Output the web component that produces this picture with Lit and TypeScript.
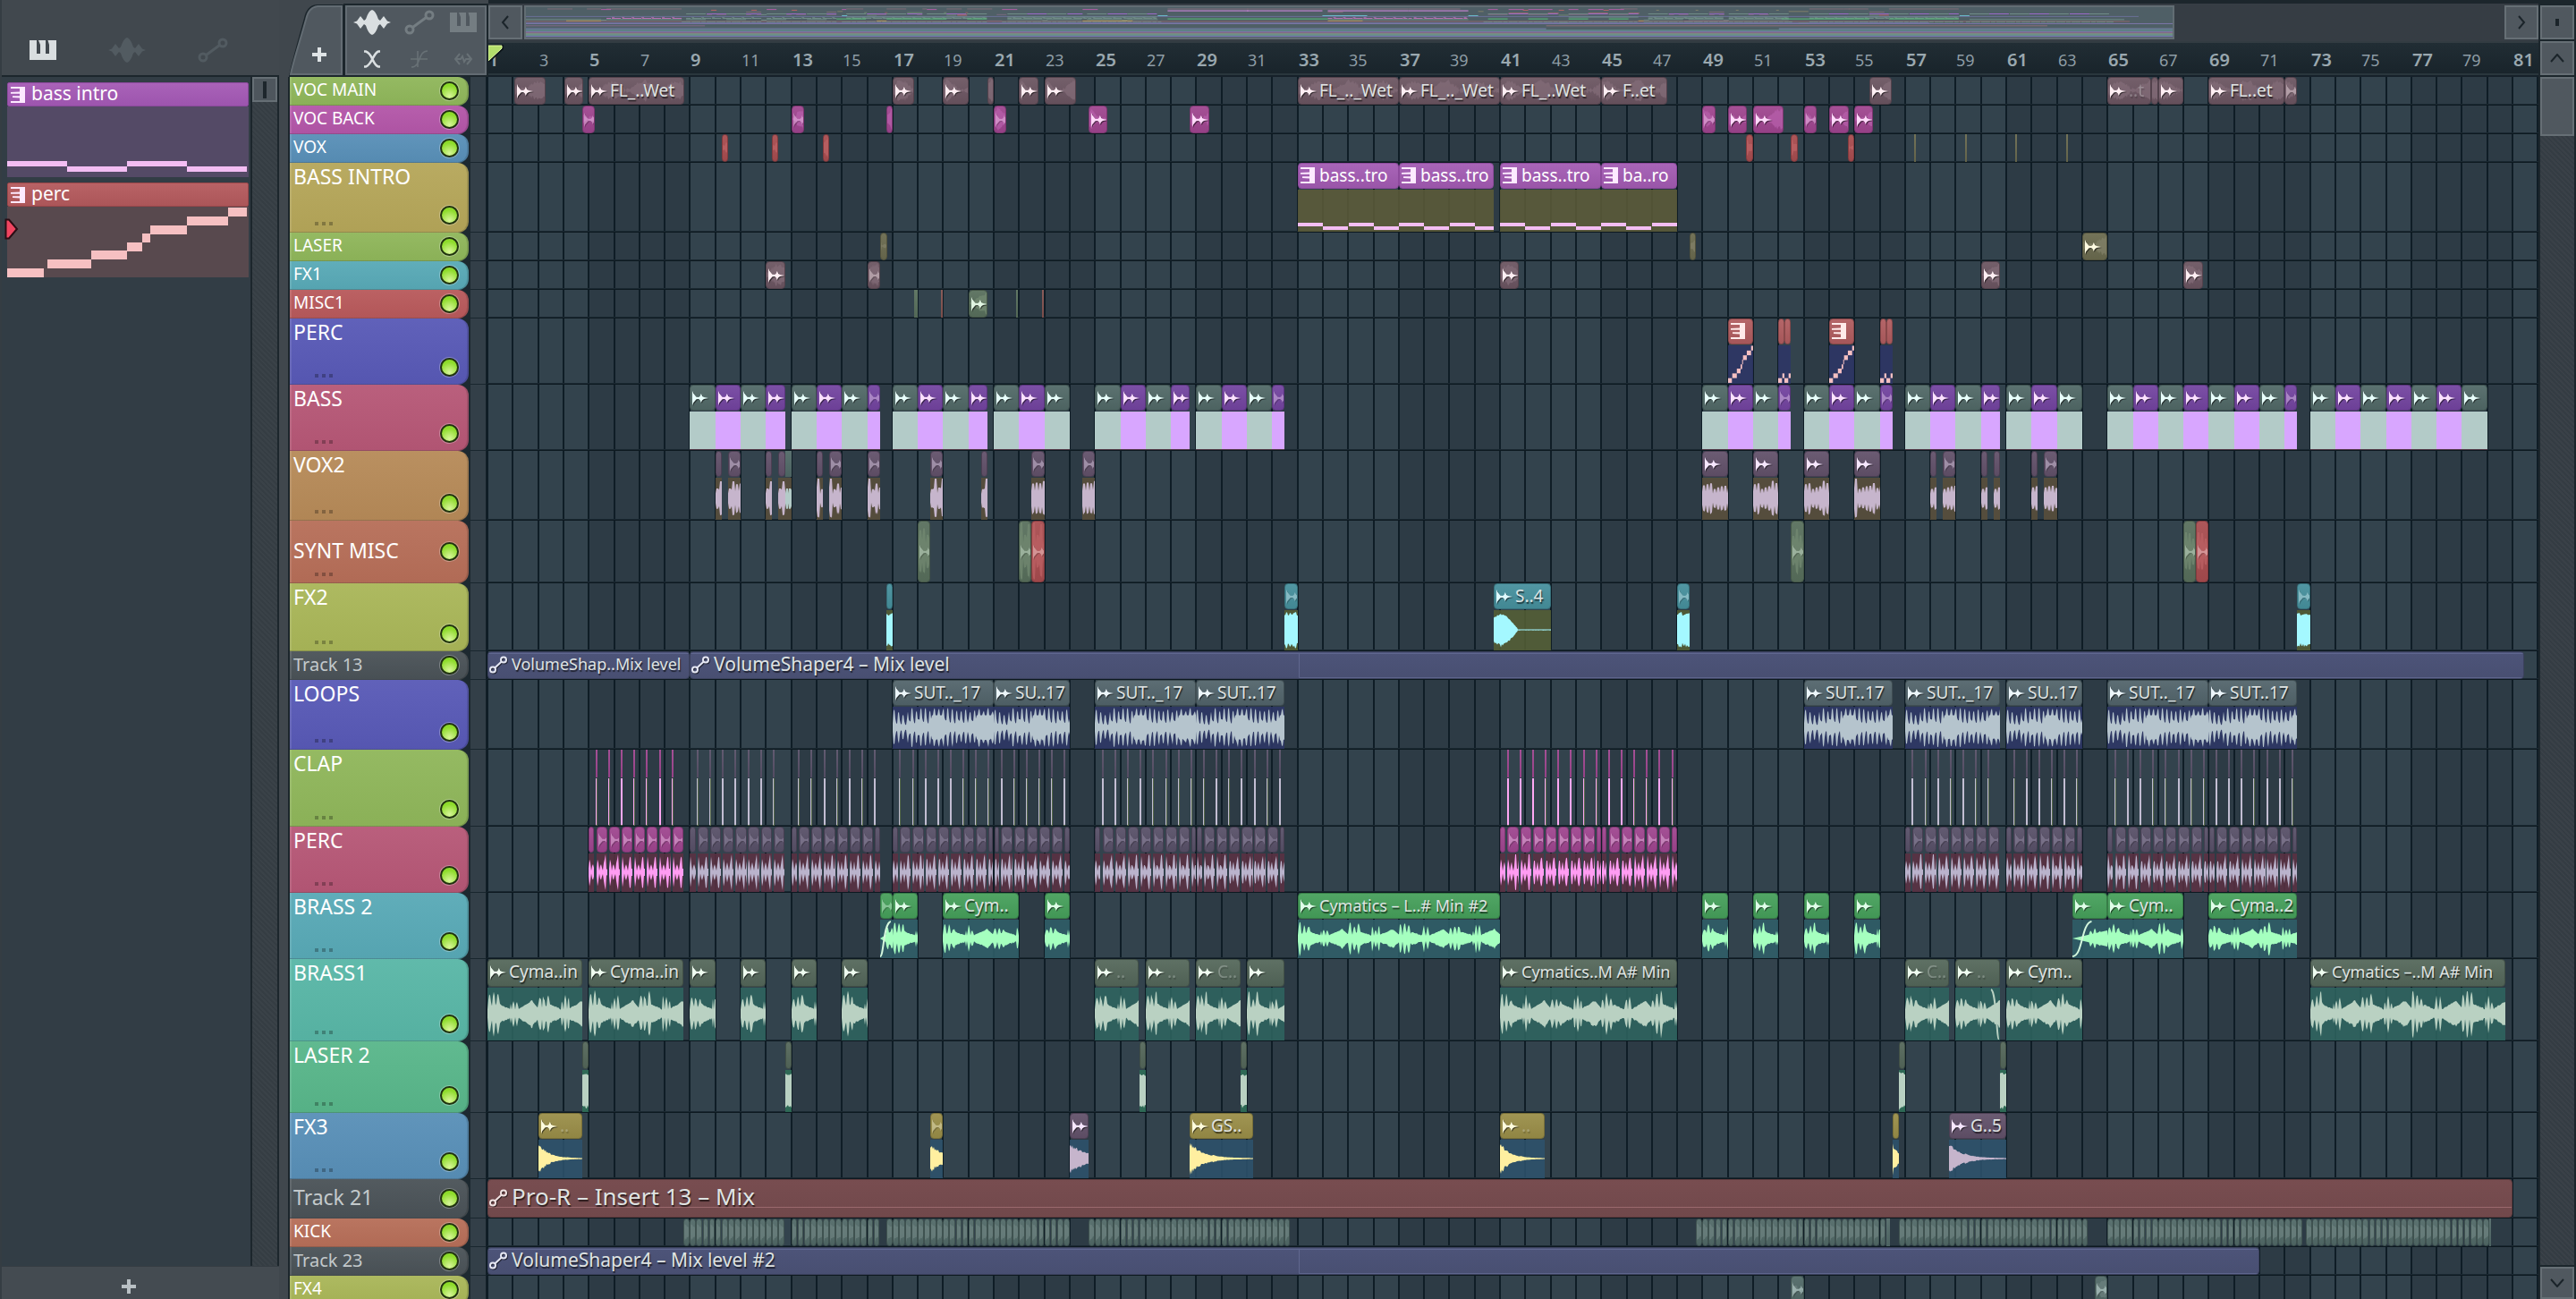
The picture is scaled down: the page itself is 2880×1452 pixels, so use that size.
import { LitElement, html, svg, css, nothing } from "lit";
import { customElement, property } from "lit/decorators.js";
import { classMap } from "lit/directives/class-map.js";
import { styleMap } from "lit/directives/style-map.js";

const BAR = 28.3;
const BARS = 82;
const xOf = (bar: number) => Math.round((bar - 1) * BAR);

type Kind = "blob" | "solid" | "brass" | "loop" | "perc" | "vox" | "decay" | "sweep" | "block" | "notes" | "steps" | "none";
interface Paint { head: string; inner: string; wave: string; icon: string }
interface Clip { s: number; e: number; c: string; label?: string; dim?: boolean; fade?: "in" | "out"; keys?: boolean; kind?: Kind }
interface Track {
  name: string; h: number; color: string; body?: string; kind: Kind; clips: Clip[];
  auto?: boolean; muted?: boolean; mid?: boolean;
}

const PAINT: Record<string, Paint> = {
  mauve: { head: "#6b5561", inner: "#836c78", wave: "#c8b5cc", icon: "#ffeef3" },
  plum: { head: "#62516a", inner: "#7a6980", wave: "#c6b5cc", icon: "#f6e6ff" },
  haze: { head: "#585068", inner: "#7c748c", wave: "#bab3cc", icon: "#a49cb4" },
  magenta: { head: "#9f458f", inner: "#b75fab", wave: "#ff9cf2", icon: "#ffd9fa" },
  red: { head: "#a84c4f", inner: "#bd6265", wave: "#ffc3c3", icon: "#ffe4e4" },
  rose: { head: "#b05c5f", inner: "#c07073", wave: "#f6c0c2", icon: "#ffeaea" },
  rust: { head: "#82524f", inner: "#946562", wave: "#dcc0be", icon: "#ffeaea" },
  olive: { head: "#6a6a4e", inner: "#828068", wave: "#e6e4c0", icon: "#fffbe2" },
  sage: { head: "#586f5c", inner: "#738a72", wave: "#cfe4cf", icon: "#e0f5e2" },
  moss: { head: "#54675a", inner: "#6d8072", wave: "#b9d1c2", icon: "#effdf0" },
  fern: { head: "#46a05b", inner: "#5fb472", wave: "#a5ffbf", icon: "#dfffe8" },
  teal: { head: "#46909d", inner: "#66a6b0", wave: "#a4f8ff", icon: "#dffaff" },
  pine: { head: "#516967", inner: "#6c817f", wave: "#b3cbc8", icon: "#e8fffb" },
  violet: { head: "#7344a0", inner: "#8c60b4", wave: "#d8a6ff", icon: "#fbe0ff" },
  orchid: { head: "#a35bb3", inner: "#b472c2", wave: "#f3bdf3", icon: "#fdeaff" },
  slate: { head: "#52646b", inner: "#6c7d84", wave: "#b5c4cd", icon: "#ecf6fb" },
  gold: { head: "#9a8e48", inner: "#b0a462", wave: "#ffefa0", icon: "#fffcdc" },
  indigo: { head: "#4d5479", inner: "#6a7098", wave: "#c8cce8", icon: "#e6e8f4" },
  brick: { head: "#784d50", inner: "#93666a", wave: "#e4c8c8", icon: "#f0e2e2" },
};

const cl = (c: string, ...list: [number, number, string?][]): Clip[] =>
  list.map(([s, e, label]) => ({ s, e, c, label }));

const bassRun = (s: number, e: number): Clip[] => {
  const out: Clip[] = [];
  for (let b = s, i = 0; b < e; b++, i++) out.push({ s: b, e: Math.min(b + 1, e), c: i % 2 ? "violet" : "pine" });
  return out;
};
const clapRun = (c: string, s: number, n: number): Clip[] =>
  Array.from({ length: n }, (_, i) => ({ s: s + 0.27 + i * 0.5, e: s + 0.27 + i * 0.5, c }));
const percRun = (c: string, s: number, e: number): Clip[] => {
  const out: Clip[] = [{ s, e: s + 0.22, c }];
  for (let b = s + 0.3; b < e - 0.1; b += 0.5) {
    const inBlock = (b - s) % 4;
    if (inBlock > 3.7) {
      out.push({ s: b, e: b + 0.18, c }, { s: b + 0.22, e: b + 0.42, c });
    } else out.push({ s: b, e: Math.min(b + 0.43, e), c });
  }
  return out;
};
const kickRun = (s: number, e: number): Clip[] => {
  const out: Clip[] = [];
  for (let b = s; b < e - 0.05; b += 0.25) out.push({ s: b, e: Math.min(b + 0.24, e), c: "pine" });
  return out;
};

const GREEN = "#8fb65a", BLUE = "#588fb7", INDIGO = "#5859b6", PINK = "#b65776", TERRA = "#b66e58", LIME = "#a9b658", GREY = "#4a5257";

const TRACKS: Track[] = [
  { name: "VOC MAIN", h: 32, color: GREEN, kind: "blob", clips: [
    ...cl("mauve", [2.05, 3.3], [4.05, 4.78], [5, 8.77, "FL_..Wet"], [17, 17.85], [19, 20], [20.77, 21], [22, 22.75], [23, 24.25],
      [33, 37, "FL_.._Wet"], [37, 41, "FL_.._Wet"], [41, 45, "FL_..Wet"], [45, 47.6, "F..et"], [55.6, 56.46]),
    { s: 65, e: 66.72, c: "mauve", label: "..t", dim: true },
    ...cl("mauve", [66.74, 67], [67, 68], [69, 72, "FL..et"], [72, 72.48])] },
  { name: "VOC BACK", h: 32, color: "#b356a8", kind: "blob", clips: cl("magenta", [4.75, 5.25], [13, 13.5], [16.77, 17], [21, 21.5],
      [24.75, 25.5], [28.75, 29.5], [49, 49.5], [50, 50.75], [51, 52.2], [53, 53.5], [54, 54.77], [55, 55.75]) },
  { name: "VOX", h: 32, color: BLUE, kind: "blob", clips: [
    ...cl("red", [10.25, 10.5], [12.25, 12.5], [14.25, 14.5], [50.73, 51], [52.5, 52.75], [54.73, 55]),
    ...cl("olive", [57.37, 57.42], [59.36, 59.41], [61.36, 61.41], [63.37, 63.42])] },
  { name: "BASS INTRO", h: 78, color: "#b5a659", body: "#5c5b39", kind: "notes", clips:
      cl("orchid", [33, 37, "bass..tro"], [37, 40.75, "bass..tro"], [41, 45, "bass..tro"], [45, 48, "ba..ro"]).map((c) => ({ ...c, keys: true })) },
  { name: "LASER", h: 32, color: GREEN, kind: "blob", clips: cl("olive", [16.53, 16.78], [48.5, 48.75], [64, 65]) },
  { name: "FX1", h: 32, color: "#58a9b6", kind: "blob", clips: cl("mauve", [12, 12.75], [16, 16.5], [41, 41.75], [60, 60.75], [68, 68.76]) },
  { name: "MISC1", h: 32, color: "#b8595b", kind: "blob", clips: [
    ...cl("sage", [17.87, 18], [20, 20.75], [21.87, 21.97]), ...cl("rust", [18.9, 18.98], [22.9, 22.98])] },
  { name: "PERC", h: 74, color: INDIGO, body: "#2e3666", kind: "steps", clips:
      cl("rose", [50, 51], [52, 52.25], [52.25, 52.5], [54, 55], [56, 56.25], [56.25, 56.5]).map((c) => ({ ...c, keys: true })) },
  { name: "BASS", h: 74, color: PINK, body: "#5a3a4a", kind: "solid", clips: [
    ...bassRun(9, 12.75), ...bassRun(13, 16.5), ...bassRun(17, 20.75), ...bassRun(21, 24), ...bassRun(25, 28.75), ...bassRun(29, 32.5),
    ...bassRun(49, 52.5), ...bassRun(53, 56.5), ...bassRun(57, 60.75), ...bassRun(61, 64), ...bassRun(65, 72.5), ...bassRun(73, 80)] },
  { name: "VOX2", h: 78, color: "#b68a58", body: "#5a4e3b", kind: "vox", clips: [
    ...cl("plum", [10, 10.25], [10.5, 11], [12, 12.25], [12.5, 12.75]), ...cl("pine", [12.75, 12.87], [12.87, 13]),
    ...cl("plum", [14, 14.25], [14.5, 15], [16, 16.5], [18.5, 19], [20.5, 20.75], [22.5, 23], [24.5, 25],
      [49, 50], [51, 52], [53, 54], [55, 56], [58, 58.25], [58.5, 59], [60, 60.25], [60.5, 60.75], [62, 62.25], [62.5, 63])] },
  { name: "SYNT MISC", h: 70, color: TERRA, kind: "vox", mid: true, clips: [
    ...cl("sage", [18, 18.5], [22, 22.5], [52.5, 53], [68, 68.5]), ...cl("red", [22.5, 23], [68.5, 69])] },
  { name: "FX2", h: 76, color: LIME, body: "#545e36", kind: "block", clips: [
    ...cl("teal", [16.75, 17], [32.5, 33]), { s: 40.75, e: 43, c: "teal", label: "S..4", kind: "sweep" }, ...cl("teal", [48, 48.5], [72.5, 73])] },
  { name: "Track 13", h: 32, color: GREY, muted: true, kind: "none", auto: true, clips:
      cl("indigo", [1, 9, "VolumeShap..Mix level"], [9, 81.46, "VolumeShaper4 – Mix level"]) },
  { name: "LOOPS", h: 78, color: INDIGO, body: "#2e3767", kind: "loop", clips: cl("slate", [17, 21, "SUT.._17"], [21, 24, "SU..17"],
      [25, 29, "SUT.._17"], [29, 32.5, "SUT..17"], [53, 56.5, "SUT..17"], [57, 60.75, "SUT.._17"], [61, 64, "SU..17"], [65, 69, "SUT.._17"], [69, 72.5, "SUT..17"]) },
  { name: "CLAP", h: 86, color: GREEN, body: "#5b704a", kind: "solid", clips: [
    ...clapRun("magenta", 5, 7), ...clapRun("haze", 9, 7), ...clapRun("haze", 13, 7), ...clapRun("haze", 17, 14), ...clapRun("haze", 25, 15),
    ...clapRun("magenta", 41, 14), ...clapRun("haze", 57, 7), ...clapRun("haze", 61, 6), ...clapRun("haze", 65, 15)] },
  { name: "PERC", h: 74, color: PINK, body: "#5b3143", kind: "perc", clips: [
    ...percRun("magenta", 5, 8.75), ...percRun("haze", 9, 12.75), ...percRun("haze", 13, 16.5), ...percRun("haze", 17, 24), ...percRun("haze", 25, 32.5),
    ...percRun("magenta", 41, 48), ...percRun("haze", 57, 60.75), ...percRun("haze", 61, 64), ...percRun("haze", 65, 72.5)] },
  { name: "BRASS 2", h: 74, color: "#58a9b6", body: "#305f69", kind: "brass", clips: [
    { s: 16.5, e: 17, c: "fern", fade: "in" }, ...cl("fern", [17, 18], [19, 22, "Cym.."], [23, 24], [33, 41, "Cymatics – L..# Min #2"],
      [49, 50], [51, 52], [53, 54], [55, 56]), { s: 63.62, e: 65, c: "fern", fade: "in" }, ...cl("fern", [65, 68, "Cym.."], [69, 72.5, "Cyma..2"])] },
  { name: "BRASS1", h: 92, color: "#58b6a6", body: "#2f6460", kind: "brass", clips: [
    ...cl("moss", [1, 4.75, "Cyma..in"], [5, 8.75, "Cyma..in"], [9, 10], [11, 12], [13, 14], [15, 16]),
    ...cl("moss", [25, 26.72, ".."], [27, 28.75, ".."], [29, 30.75, "C.."]).map((c) => ({ ...c, dim: true })),
    ...cl("moss", [31, 32.5], [41, 48, "Cymatics..M A# Min"]), { s: 57, e: 58.75, c: "moss", label: "C..", dim: true },
    { s: 59, e: 60.75, c: "moss", label: "..", dim: true, fade: "out" }, ...cl("moss", [61, 64, "Cym.."], [73, 80.72, "Cymatics –..M A# Min"])] },
  { name: "LASER 2", h: 80, color: "#58b68a", body: "#2f7058", kind: "block", clips: cl("moss", [4.75, 5], [12.75, 13], [26.75, 27], [30.75, 31], [56.75, 57], [60.75, 61]) },
  { name: "FX3", h: 74, color: BLUE, body: "#2e526c", kind: "decay", clips: [
    { s: 3, e: 4.73, c: "gold", label: "..", dim: true }, ...cl("gold", [18.5, 19]), ...cl("plum", [24, 24.75]),
    ...cl("gold", [28.75, 31.25, "GS.."]), { s: 41, e: 42.75, c: "gold", label: "..", dim: true }, ...cl("gold", [56.5, 56.75]), ...cl("plum", [58.75, 61, "G..5"])] },
  { name: "Track 21", h: 44, color: GREY, muted: true, mid: true, kind: "none", auto: true, clips: cl("brick", [1, 81, "Pro-R – Insert 13 – Mix"]) },
  { name: "KICK", h: 32, color: TERRA, kind: "decay", clips: [
    ...kickRun(8.75, 12.75), ...kickRun(13, 16.5), ...kickRun(16.75, 24), ...kickRun(24.75, 32.7), ...kickRun(48.75, 56.42), ...kickRun(56.75, 64.2),
    ...kickRun(65, 72.7), ...kickRun(72.83, 80.15)] },
  { name: "Track 23", h: 32, color: GREY, muted: true, kind: "none", auto: true, clips: cl("indigo", [1, 71, "VolumeShaper4 – Mix level #2"]) },
  { name: "FX4", h: 32, color: LIME, kind: "blob", clips: cl("pine", [52.5, 53], [64.5, 65]) },
];

const rand = (n: number) => {
  const v = Math.sin(n * 127.1 + 11.7) * 43758.5453;
  return v - Math.floor(v);
};

const LOOP_COL = [0.22, 0.9, 1, 0.5, 0.25];
const PERC_COL = [0.2, 0.85, 0.6, 0.08, 0.35, 0.55, 0.3, 0.1, 0.5, 0.95, 1, 0.2];

/* Amplitude of a waveform kind at pixel x of a clip that is w pixels wide. */
function amp(kind: Kind, x: number, w: number, seed: number): number {
  const t = x / BAR;
  switch (kind) {
    case "brass": {
      const p = t % 2;
      const k = rand(Math.floor(t * 9) + seed * 3);
      const spike = Math.abs(Math.sin(t * 19));
      if (p < 0.46) return 0.16 + spike * (0.34 + k * 0.45);
      if (p < 0.9) return 0.15 + (0.9 - p) * 0.45 + rand(x) * 0.06;
      if (p < 1.22) return 0.14 + Math.abs(Math.sin(t * 23)) * (0.28 + k * 0.36);
      if (p < 1.78) return 0.16 + (p - 1.22) * 0.62 + rand(x) * 0.05;
      return 0.48 - (p - 1.78) * 1.2;
    }
    case "loop": {
      const bar = Math.floor(t);
      const dense = t % 4 > 3.3 || (t % 4 > 1.55 && t % 4 < 2);
      const beat = (t * 2) % 1;
      const base = LOOP_COL[Math.floor(x) % 5] * (0.78 + rand(Math.floor(x / 5) + bar) * 0.24);
      if (t % 4 < 0.6) return base * (1 - (t % 4) * 0.7);
      return Math.max(base, dense ? 0.62 : 0.42 - beat * 0.3);
    }
    case "perc":
      return Math.min(1, PERC_COL[Math.floor(x) % 12] * (0.7 + rand(Math.floor(x) + seed * 7) * 0.45));
    case "vox": {
      const c = Math.floor(x / 4);
      const a = 0.38 + rand(c + seed) * 0.5 + (rand(c * 3 + seed) > 0.75 ? 0.25 : 0);
      return Math.floor(x) % 4 === 0 ? a * 0.5 : a;
    }
    case "decay":
      return (w < 24 ? 0.75 * Math.exp((-0.9 * x) / w) : 0.85 * Math.exp((-4.4 * x) / w)) * (0.75 + rand(x + seed) * 0.35) + 0.02;
    case "sweep": {
      const u = x / w;
      return u < 0.42 ? 0.8 * Math.sin(Math.PI * (0.3 + u * 1.6)) ** 1.2 * (0.9 + rand(x) * 0.12) + 0.03 : 0.03;
    }
    case "block":
      return 0.74 + rand(Math.floor(x / 2) + seed) * 0.2;
    case "blob":
      return Math.max(0.04, 0.45 + 0.35 * Math.sin(t * 5 + seed) + (rand(x + seed) - 0.5) * 0.35);
    default:
      return 1;
  }
}

function wavePath(kind: Kind, w: number, h: number, seed: number): string {
  const mid = h / 2;
  const top: string[] = [];
  const bottom: string[] = [];
  for (let x = 0; x <= w; x++) {
    const a = Math.min(1, Math.max(0.02, amp(kind, x, w, seed) || 0.02));
    const b = Math.min(1, a * (0.9 + rand(x * 3 + seed) * 0.2));
    top.push(`${x} ${(mid - a * (mid - 1)).toFixed(1)}`);
    bottom.unshift(`${x} ${(mid + b * (mid - 1)).toFixed(1)}`);
  }
  return `M${top.join("L")}L${bottom.join("L")}Z`;
}

const STEPS: [number, number, number][] = [
  [0, 41, 69], [45, 49, 59], [94, 40, 49], [134, 17, 40], [151, 9, 30], [160, 41, 21], [201, 46, 11], [247, 21, 1],
];

const waveIcon = html`<svg class="i-wave" viewBox="0 0 18 16" aria-hidden="true">
  <path d="M0 0Q1 3.4 4.6 6.8L7 7Q9.2 6 9.8 3Q10.6 6 13 7L18 8L13 9Q10.6 10 9.8 13Q9.2 10 7 9L4.6 9.2Q1 12.6 0 16Z" fill="currentColor"/></svg>`;
const keysIcon = html`<svg class="i-keys" viewBox="0 0 16 18" aria-hidden="true">
  <path d="M0 0H16V18H0V16H10V12.6L2 12V10.2H10V7.8H0V6L10 5.4V2H0Z" fill="currentColor"/></svg>`;
const linkIcon = html`<svg class="i-link" viewBox="0 0 20 20" aria-hidden="true">
  <g fill="none" stroke="currentColor" stroke-width="2"><circle cx="4" cy="15.5" r="3"/><circle cx="16" cy="4.5" r="3"/><path d="M6.2 13.4L13.8 6.6"/></g></svg>`;
const bigWave = html`<svg width="42" height="28" viewBox="0 0 42 28" aria-hidden="true">
  <path d="M0 14L4 12.5L8 7L12 12L14 10.5Q17 1 21 0Q25 1 28 10.5L30 12L34 7L38 12.5L42 14L38 15.5L34 21L30 16L28 17.5Q25 27 21 28Q17 27 14 17.5L12 16L8 21L4 15.5Z" fill="currentColor"/></svg>`;
const bigLink = html`<svg width="34" height="28" viewBox="0 0 34 28" aria-hidden="true">
  <g fill="none" stroke="currentColor" stroke-width="3"><circle cx="6" cy="22" r="4"/><circle cx="28" cy="6" r="4"/><path d="M9.5 19.5L24.5 8.5"/></g></svg>`;
const bigKeys = html`<svg width="30" height="22" viewBox="0 0 30 22" aria-hidden="true">
  <path d="M0 0H8V15H12V5L10 0H18V15H22V5L20.5 0H30V22H0Z" fill="currentColor"/></svg>`;
const crossIcon = html`<svg width="20" height="20" viewBox="0 0 20 20" aria-hidden="true">
  <path d="M1 1.5H3C11 4 10 16 17 18.5H19M1 18.5H3C10 16 11 4 17 1.5H19" fill="none" stroke="currentColor" stroke-width="2.6"/></svg>`;
const curveIcon = html`<svg width="20" height="20" viewBox="0 0 20 20" aria-hidden="true">
  <path d="M1 19C12 19 8 1 19 1M0 10H19M8 1V19" fill="none" stroke="currentColor" stroke-width="1.6"/></svg>`;
const stretchIcon = html`<svg width="22" height="14" viewBox="0 0 22 14" aria-hidden="true">
  <path d="M7 1L2 7L7 13M15 1L20 7L15 13M2 7H8L10 4L12 10L14 7H20" fill="none" stroke="currentColor" stroke-width="2"/></svg>`;
const plusIcon = html`<svg width="16" height="16" viewBox="0 0 16 16" aria-hidden="true"><path d="M6 0H10V6H16V10H10V16H6V10H0V6H6Z" fill="currentColor"/></svg>`;

@customElement("pl-clip")
export class PlClip extends LitElement {
  @property({ attribute: false }) clip!: Clip;
  @property({ attribute: false }) track!: Track;

  static styles = css`
    :host { display: flex; flex-direction: column; box-sizing: border-box; overflow: hidden; }
    .head { display: flex; align-items: flex-start; box-sizing: border-box; position: relative; overflow: hidden; border: 1px solid var(--edge); border-radius: 4px;
      background: linear-gradient(var(--hi), var(--lo)); color: var(--ink); flex: none; }
    .head.thin { border-width: 0; border-radius: 0; }
    .head.full { flex: 1; }
    .inner { position: absolute; inset: 0; opacity: 0.75; }
    .glyph { flex: none; display: flex; width: 23px; padding-left: 2px; padding-top: 6px; box-sizing: border-box; position: relative; }
    .full .glyph { padding-top: 7px; }
    .tall .glyph { padding-top: 26px; }
    .auto .glyph { width: 26px; padding-left: 1px; }
    .ghost { opacity: 0.4; padding-left: 1px; }
    .i-wave { width: 18px; height: 16px; filter: drop-shadow(1px 1px 0 #0008); }
    .i-keys { width: 16px; height: 18px; margin-top: -2px; }
    .i-link { width: 20px; height: 20px; margin-top: -3px; filter: drop-shadow(1px 1px 0 #0008); }
    .label { position: relative; font-size: 19px; line-height: 26px; white-space: nowrap; text-shadow: 1px 2px 1px #0009; color: #dfe3e2; }
    .full .label { line-height: 28px; }
    .auto .label { font-size: 21px; line-height: 27px; }
    .label.compact, .auto .label.compact { font-size: 18px; }
    .keys .label { color: #fff; text-shadow: none; }
    .big .label { font-size: 26px; line-height: 37px; }
    .big .glyph { padding-top: 13px; }
    .faint { opacity: 0.3; }
    .body { flex: 1; min-height: 0; margin-top: 1px; background: var(--body); display: block; overflow: hidden; }
    svg { display: block; }
  `;

  render() {
    const { clip, track } = this;
    const p = PAINT[clip.c];
    const w = Math.max(2, xOf(clip.e) - xOf(clip.s));
    const split = track.h >= 74;
    const headH = track.h >= 80 ? 30 : 28;
    const bodyH = track.h - headH - 4;
    const kind = clip.kind ?? track.kind;
    const seed = track.name.length * 5 + Math.round(clip.s * 0.25);
    const icon = w >= 12;
    const edge = `color-mix(in srgb, ${p.head} 78%, black)`;
    const vars = {
      "--hi": track.auto ? p.head : `color-mix(in srgb, ${p.head} 94%, white)`,
      "--lo": `color-mix(in srgb, ${p.head} 94%, black)`,
      "--edge": clip.c === "orchid" ? "#8d4a9c" : edge, "--ink": p.icon,
      ...(split ? { height: `${headH + 1}px` } : {}),
    };
    const compact = (clip.label?.length ?? 0) > 16 && clip.e - clip.s <= 8;
    const head = html`<div class=${classMap({ head: true, thin: w < 5, full: !split, tall: !split && track.h > 60, keys: !!clip.keys, auto: !!track.auto, big: !!track.auto && track.h > 40 })} style=${styleMap(vars)}>
      ${!split && !track.auto && w > 4
        ? html`<svg class="inner" width=${w} height=${track.h - 2}><path d=${wavePath(kind, w, track.h - 4, seed)} fill=${p.inner}/></svg>` : nothing}
      ${track.auto ? html`<svg class="inner" width=${w} height=${track.h - 2}>${track.h > 40
        ? svg`<path d="M0 ${30.5}H${w - 2}" stroke="#a87478"/>`
        : svg`<path d="M0 1.5H${w - 2}M${xOf(33) - xOf(clip.s)}.5 2V28.5H${w}" fill="none" stroke="#747ba6" opacity=".7"/>`}</svg>` : nothing}
      ${icon ? html`<span class=${classMap({ glyph: true, ghost: w < 17 })}>${clip.keys ? keysIcon : track.auto ? linkIcon : waveIcon}</span>` : nothing}
      ${clip.label ? html`<span class=${classMap({ label: true, faint: !!clip.dim, compact })}>${clip.label}</span>` : nothing}
    </div>`;
    if (!split) return head;
    return html`${head}<div class="body" style=${styleMap({ "--body": (track.body ?? p.head) + "e0" })}>
      <svg width=${w} height=${bodyH}>${this.content(kind, w, bodyH, p, seed)}</svg></div>`;
  }

  private content(kind: Kind, w: number, h: number, p: Paint, seed: number) {
    const { clip } = this;
    if (kind === "solid") {
      return svg`<rect width=${w > 3 ? w : rand(clip.s * 9) > 0.5 ? 2 : 1} height=${h + 2} fill=${w > 3 ? p.wave : clip.c === "magenta" ? "#ffa8f4" : "#c2bdd2"}/>`;
    }
    if (kind === "notes") {
      const n = Math.ceil(clip.e - clip.s);
      return svg`${Array.from({ length: n }, (_, i) => svg`<rect x=${xOf(i + 1)} y=${i % 2 ? 41 : 37} width="28" height="4" fill=${p.wave}/>`)}`;
    }
    if (kind === "steps") {
      return svg`${STEPS.map(([x, sw, y]) => svg`<rect x=${x / 9.6} y=${(y * h) / 79} width=${Math.max(1, sw / 9.6)} height=${h / 8} fill=${p.wave}/>`)}`;
    }
    const fade = clip.fade === "in"
      ? svg`<path d=${`M${0} ${h - 1}C${w * 0.3} ${h - 1} ${w * 0.25} 4 ${w * (w > 20 ? 0.55 : 0.85)} 2`} fill="none" stroke="#d4f7dd" stroke-width="2"/>`
      : clip.fade === "out" ? svg`<path d=${`M${w - 10} 2C${w - 4} 4 ${w - 4} ${h} ${w - 1} ${h}`} fill="none" stroke="#b9d1c2" stroke-width="2"/>` : nothing;
    const from = clip.fade === "in" ? Math.round(w * 0.45) : 0;
    const ramp = clip.fade === "in" ? svg`<path d=${`M0 ${h / 2}L${w} ${h / 2 - 9}V${h / 2 + 9}Z`} fill=${p.wave}/>` : nothing;
    return svg`${ramp}<path d=${wavePath(kind, w - from, clip.fade === "in" ? h * 0.7 : h, seed)} transform=${`translate(${from} ${clip.fade === "in" ? h * 0.15 : 0})`} fill=${p.wave}/>${fade}`;
  }
}

@customElement("pl-minimap")
export class PlMinimap extends LitElement {
  static styles = css`:host { display: block; } svg { display: block; width: 100%; height: 100%; }`;

  private tint(t: Track, c: Clip): string {
    const bright: Record<string, string> = { orchid: "#e08aea", fern: "#58c47a", gold: "#d8b84c", teal: "#6fd0dc", magenta: "#c070b8", violet: "#a06cd0" };
    if (["pine", "haze", "moss", "slate"].includes(c.c)) return "#729089";
    if (t.auto || t.kind === "blob") return PAINT[c.c].inner;
    return bright[c.c] ?? PAINT[c.c].inner;
  }

  render() {
    const k = 22.4;
    const full: [number, number, number, string][] = [
      [25, 0, 1840, "#7b76a8"], [27.5, 0, 200, "#806a86"], [27.5, 1140, 560, "#8a6f78"], [31, 0, 1140, "#7782b0"], [31, 1400, 440, "#7a88b0"],
      [33, 0, 1840, "#6aa39e"], [34.5, 0, 1840, "#7f74a8"], [36, 0, 1840, "#9b7196"], [37.2, 0, 1840, "#86ad8c"], [38.4, 0, 1840, "#70a49c"], [40, 0, 1840, "#7f79bb"],
    ];
    return html`<svg viewBox="0 6 1840 36" preserveAspectRatio="none" aria-hidden="true">
      ${TRACKS.map((t, i) => t.clips.map((c) => svg`<rect x=${Math.round((c.s - 1) * k)} y=${(7.6 + i * 0.74).toFixed(1)}
        width=${Math.max(3, Math.round((c.e - c.s) * k))} height="1" fill=${this.tint(t, c)}/>`))}
      ${full.map(([y, x, w, f]) => svg`<rect x=${x} y=${y} width=${w} height="1.1" fill=${f}/>`)}
    </svg>`;
  }
}

@customElement("app-root")
export class AppRoot extends LitElement {
  static styles = css`
    :host { display: block; font-family: "Noto Sans", "Open Sans", sans-serif; color: #dfe3e4; }
    * { box-sizing: border-box; }
    svg { display: block; }
    button { border: 0; padding: 0; margin: 0; background: none; font: inherit; color: inherit; display: flex; align-items: center; justify-content: center; }
    .app { display: grid; grid-template-columns: 312px minmax(0, 1fr) 42px; grid-template-rows: minmax(0, 1fr); height: 100vh; overflow: hidden; background: #40474d; }

    .side { display: flex; flex-direction: column; min-width: 0; border-left: 2px solid #353d43; }
    .side-tools { height: 84px; flex: none; display: flex; align-items: flex-end; gap: 58px; padding: 0 0 14px 31px; background: #41484e; }
    .side-tools button { color: #525b61; height: 28px; }
    .side-tools button.on { color: #d9dee0; }
    .picker { flex: 1; min-height: 0; display: grid; grid-template-columns: minmax(0, 1fr) 2px 28px 2px; background: #1c262c; padding-top: 2px; }
    .patterns { margin: 0; padding: 6px 2px 0 6px; list-style: none; background: #323d45; display: flex; flex-direction: column; gap: 6px; position: relative; }
    .pattern { display: flex; flex-direction: column; height: 106px; }
    .pattern-head { display: flex; align-items: center; gap: 7px; height: 27px; padding-left: 3px; border-radius: 2px; justify-content: flex-start; font-size: 21px; line-height: 24px; color: #fff; padding-bottom: 4px; }
    .pattern.bass .pattern-head { background: linear-gradient(#a962b8, #9d55ae); border: 1px solid #8c4a9d; }
    .pattern.perc .pattern-head { background: linear-gradient(#b86265, #ac5659); border: 1px solid #9a4649; }
    .pattern-head svg { width: 16px; height: 18px; color: #fdeaff; margin-top: 4px; }
    .pattern-body { flex: 1; width: 100%; }
    .bass .pattern-body { background: #544a66; }
    .perc .pattern-body { background: #58494e; }
    .marker { position: absolute; left: 3px; top: 158px; }
    .track-bar { grid-column: 3; background: repeating-linear-gradient(45deg, #353d43 0 2px, #3a4248 2px 4px); }
    .grip { height: 28px; border: 2px solid #666f75; background: #4e565d; display: flex; justify-content: center; align-items: center; }
    .grip i { width: 4px; height: 19px; background: #1d262c; }
    .side-foot { height: 37px; flex: none; background: #444b51; border-top: 1px solid #353d43; color: #b9c0c4; padding: 8px 26px 0 0; width: 100%; }

    .main { display: grid; grid-template-rows: 86px minmax(0, 1fr); min-width: 0; min-height: 0; padding-left: 10px; }
    .top { display: grid; grid-template-columns: 224px minmax(0, 1fr); min-width: 0; }
    .tabs { display: grid; grid-template-columns: 60px 1fr; column-gap: 2px; padding: 4px 0 0 2px; position: relative; }
    .tab { position: relative; padding: 49px 0 0 25px; color: #dfe4e6; }
    .tab-shape { position: absolute; left: -2px; top: 0; }
    .tab .plus { position: relative; }
    .tools { display: grid; grid-template-columns: 56px 50px 1fr; grid-template-rows: 34px 32px; row-gap: 8px; border: 2px solid #636c73; background: #50585f; outline: 2px solid #1c262c; margin-top: 2px; margin-right: 2px; height: 78px; }
    .tools button { color: #747d82; }
    .tools button.on { color: #dadfe1; }
    .tools button.dim { color: #687176; }
    .time { display: flex; flex-direction: column; min-width: 0; }
    .map-row { height: 48px; flex: none; display: grid; grid-template-columns: 40px minmax(0, 5fr) minmax(0, 1fr) 38px; background: #363d44; border-top: 4px solid #1c262c; padding: 2px 0 4px; border-bottom: 2px solid #323c42; }
    .box { border: 2px solid #666f75; background: #50585f; color: #1b242a; width: 38px; }
    .map-row .box { height: 38px; }
    .map-row .right { grid-column: 4; }
    .map-thumb { height: 38px; border: 2px solid #626d73; background: #4f5f66; }
    pl-minimap { height: 34px; }
    .ruler { height: 34px; display: flex; background: linear-gradient(#212d34, #19242b); overflow: hidden; position: relative; color: #8e9da5; }
    .tick { flex: none; font-size: 18px; line-height: 39px; }
    .tick.major { font-size: 20px; line-height: 38px; font-weight: 600; color: #9aa8af; }
    .ruler-base { height: 4px; background: #2a363d; border-bottom: 2px solid #16212a; }
    .playhead { position: absolute; left: 0; top: 2px; }

    .rows { position: relative; overflow: hidden; border-left: 2px solid #1c262c; background: #2d3b45; }
    .grid { position: absolute; left: 220px; top: 0; height: 100%; width: calc(100% - 220px); }
    .row { display: grid; grid-template-columns: 200px 20px minmax(0, 1fr); position: relative; background: linear-gradient(#1d2930, #1d2930) no-repeat 0 0 / 202px 100%; }
    .track { display: grid; grid-template-columns: 1fr 40px; border-radius: 0 12px 12px 0; padding-left: 4px; position: relative; background: linear-gradient(color-mix(in srgb, var(--c) 95%, white), color-mix(in srgb, var(--c) 97%, black)); border-bottom: 1px solid #0003; border-right: 2px solid #0002; box-shadow: inset 2px 0 0 #ffffff1a; }
    .name { font-size: 19px; line-height: 29px; color: #fff; white-space: nowrap; }
    .large .name { font-size: 23px; line-height: 30px; }
    .mid .name { align-self: center; padding-bottom: 4px; }
    .muted .name { color: #c3c9cb; }
    .track:not(.large).muted .name { font-size: 20px; }
    .led { appearance: none; margin: 0; width: 21px; height: 21px; border-radius: 50%; border: 2px solid #21340f; box-shadow: 0 0 0 1px #ffffff48; background: radial-gradient(circle at 50% 85%, #d8f59a, #8ddb2a 70%); align-self: center; justify-self: center; margin-bottom: 1px; }
    .large:not(.mid) .led { align-self: end; margin-bottom: 8px; }
    .dots { position: absolute; left: 28px; bottom: 7px; width: 20px; height: 4px; background: repeating-linear-gradient(90deg, #0004 0 4px, transparent 4px 8px); }
    .gap { margin-left: 2px; background: #333f48; border-bottom: 1px solid #19262e; border-right: 1px solid #131f27; }
    .lane { position: relative; overflow: hidden; border-bottom: 1px solid #0d1920; box-shadow: inset 0 -1px 0 #1a2831; margin-left: 1px; }
    pl-clip { position: absolute; top: 0; bottom: 0; }

    .scroll { display: flex; flex-direction: column; background: #1c262c; padding: 6px 2px 0; gap: 2px; min-height: 0; }
    .scroll .box { flex: none; }
    .s-corner, .s-up { height: 38px; }
    .s-track { flex: 1; min-height: 0; background: repeating-linear-gradient(45deg, #343c43 0 2px, #3a4148 2px 4px); }
    .s-thumb { height: 66px; }
    .s-down { height: 36px; }
  `;

  private grid() {
    const out = [];
    for (let b = 1; b <= BARS; b++) {
      const x = xOf(b);
      const w = xOf(b + 1) - x;
      out.push(svg`<rect x=${x} y="0" width=${w} height="100%" fill=${Math.floor((b - 1) / 4) % 2 ? "#2d3b45" : "#33434d"}/><rect x=${x} y="0" width="2" height="100%" fill="#0f1d26"/>`);
    }
    return html`<svg class="grid" aria-hidden="true">${out}</svg>`;
  }

  private row(t: Track) {
    const large = t.h >= 44;
    return html`<div class="row" style=${styleMap({ height: `${t.h}px` })}>
      <label class=${classMap({ track: true, large, mid: !!t.mid, muted: !!t.muted })} style=${styleMap({ "--c": t.color })}>
        <span class="name">${t.name}</span>
        <input class="led" type="checkbox" checked />
        ${t.h >= 70 ? html`<span class="dots"></span>` : nothing}
      </label>
      <div class="gap"></div>
      <div class="lane">${t.clips.map((c) => html`<pl-clip .clip=${c} .track=${t}
        style=${styleMap({ left: `${xOf(c.s)}px`, width: `${Math.max(2, xOf(c.e) - xOf(c.s))}px` })}></pl-clip>`)}</div>
    </div>`;
  }

  render() {
    const ticks = Array.from({ length: 41 }, (_, i) => 1 + i * 2);
    return html`<div class="app">
      <aside class="side">
        <div class="side-tools">
          <button class="on" aria-label="Patterns">${bigKeys}</button>
          <button aria-label="Audio clips">${bigWave}</button>
          <button aria-label="Automation clips">${bigLink}</button>
        </div>
        <div class="picker">
          <ul class="patterns">
            <li class="pattern bass"><button class="pattern-head">${keysIcon}bass intro</button>
              <svg class="pattern-body" viewBox="0 0 270 79" preserveAspectRatio="none" aria-hidden="true">
                ${[0, 1, 2, 3].map((i) => svg`<rect x=${i * 67} y=${i % 2 ? 67 : 61} width="67" height="6" fill="#f3bdf3"/>`)}</svg></li>
            <li class="pattern perc"><button class="pattern-head">${keysIcon}perc</button>
              <svg class="pattern-body" viewBox="0 0 270 79" preserveAspectRatio="none" aria-hidden="true">
                ${STEPS.map(([x, w, y]) => svg`<rect x=${x} y=${y} width=${w} height="10" fill="#f6c0c2"/>`)}</svg>
              <svg class="marker" width="16" height="24" viewBox="0 0 16 24" aria-hidden="true"><path d="M1.5 1.5H5L14 12L5 22.5H1.5Z" fill="#ef4560" stroke="#2a0d14" stroke-width="2"/></svg></li>
          </ul>
          <div class="track-bar"><div class="grip"><i></i></div></div>
        </div>
        <button class="side-foot" aria-label="Add pattern">${plusIcon}</button>
      </aside>

      <main class="main">
        <div class="top">
          <div class="tabs">
            <div class="tab">
              <svg class="tab-shape" width="62" height="82" viewBox="0 0 62 82" aria-hidden="true">
                <path d="M1 82C4 66 12 38 18 16Q21 2 32 1H62V82Z" fill="#1c262c"/><path d="M3 79C6 64 14 40 20 18Q23 4 33 3H60V79Z" fill="#50585f" stroke="#636c73" stroke-width="2"/></svg>
              <button class="plus" aria-label="Add playlist">${plusIcon}</button>
            </div>
            <div class="tools">
              <button class="on" aria-label="Audio">${bigWave}</button>
              <button aria-label="Automation">${bigLink}</button>
              <button aria-label="Pattern">${bigKeys}</button>
              <button class="on" aria-label="Crossfade">${crossIcon}</button>
              <button class="dim" aria-label="Curve">${curveIcon}</button>
              <button class="dim" aria-label="Stretch">${stretchIcon}</button>
            </div>
          </div>
          <div class="time">
            <div class="map-row">
              <button class="box" aria-label="Scroll left"><svg width="10" height="16" viewBox="0 0 10 16"><path d="M8 1L2 8L8 15" fill="none" stroke="currentColor" stroke-width="2"/></svg></button>
              <div class="map-thumb"><pl-minimap></pl-minimap></div>
              <button class="box right" aria-label="Scroll right"><svg width="10" height="16" viewBox="0 0 10 16"><path d="M2 1L8 8L2 15" fill="none" stroke="currentColor" stroke-width="2"/></svg></button>
            </div>
            <div class="ruler">
              ${ticks.map((b) => html`<span class=${classMap({ tick: true, major: b % 4 === 1 })} style=${styleMap({ width: `${xOf(b + 2) - xOf(b)}px` })}>${b}</span>`)}
              <svg class="playhead" width="18" height="20" viewBox="0 0 18 20" aria-hidden="true"><path d="M0 0H17V5L2 19H0Z" fill="#0d151a"/><path d="M0 1H15V4L0 18Z" fill="#b4de6c" stroke="#e4ffa0" stroke-width="1"/></svg>
            </div>
            <div class="ruler-base"></div>
          </div>
        </div>
        <div class="rows">
          ${this.grid()}
          ${TRACKS.map((t) => this.row(t))}
        </div>
      </main>

      <div class="scroll">
        <button class="box s-corner" aria-label="Options"><svg width="4" height="8" viewBox="0 0 4 8"><rect width="4" height="8" fill="currentColor"/></svg></button>
        <button class="box s-up" aria-label="Scroll up"><svg width="16" height="10" viewBox="0 0 16 10"><path d="M1 9L8 1L15 9" fill="none" stroke="currentColor" stroke-width="2"/></svg></button>
        <div class="s-track"><div class="box s-thumb"></div></div>
        <button class="box s-down" aria-label="Scroll down"><svg width="16" height="10" viewBox="0 0 16 10"><path d="M1 1L8 9L15 1" fill="none" stroke="currentColor" stroke-width="2"/></svg></button>
      </div>
    </div>`;
  }
}
